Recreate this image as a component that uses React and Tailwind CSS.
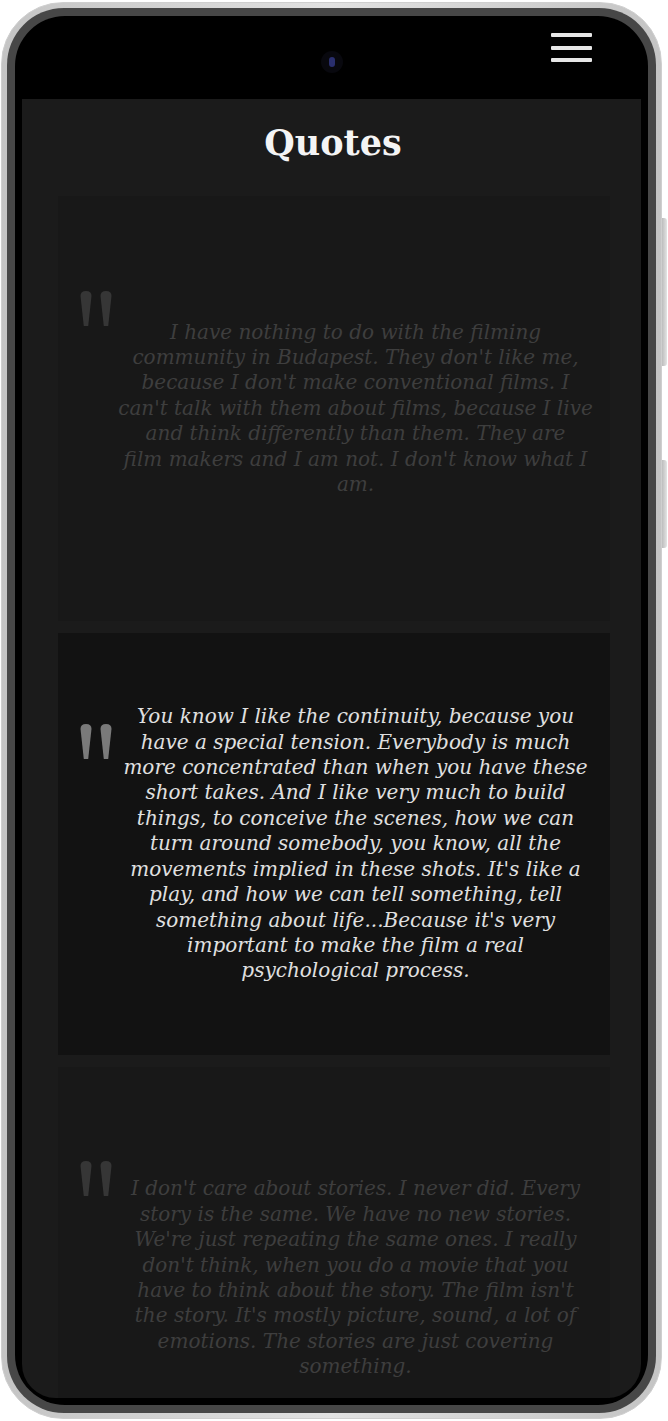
import React from "react";

const quotes = [
  {
    lines: [
      "I have nothing to do with the filming",
      "community in Budapest. They don't like me,",
      "because I don't make conventional films. I",
      "can't talk with them about films, because I live",
      "and think differently than them. They are",
      "film makers and I am not. I don't know what I",
      "am.",
    ],
    active: false,
    height: "h-[425px]",
    markTop: "mt-[95px]",
  },
  {
    lines: [
      "You know I like the continuity, because you",
      "have a special tension. Everybody is much",
      "more concentrated than when you have these",
      "short takes. And I like very much to build",
      "things, to conceive the scenes, how we can",
      "turn around somebody, you know, all the",
      "movements implied in these shots. It's like a",
      "play, and how we can tell something, tell",
      "something about life...Because it's very",
      "important to make the film a real",
      "psychological process.",
    ],
    active: true,
    height: "h-[422px]",
    markTop: "mt-[91px]",
  },
  {
    lines: [
      "I don't care about stories. I never did. Every",
      "story is the same. We have no new stories.",
      "We're just repeating the same ones. I really",
      "don't think, when you do a movie that you",
      "have to think about the story. The film isn't",
      "the story. It's mostly picture, sound, a lot of",
      "emotions. The stories are just covering",
      "something.",
    ],
    active: false,
    height: "h-[422px]",
    markTop: "mt-[94px]",
  },
];

// big straight double quote, two tapered strokes
const QuoteMark = ({ active }) => (
  <svg width="34" height="36" viewBox="0 0 34 36" className={active ? "text-[#7a7a7a]" : "text-[#363636]"}>
    <path d="M0.5 5 Q0.5 0 6 0 Q11.5 0 11.5 5 L8.2 35 L3.8 35 Z" fill="currentColor" />
    <path d="M20.5 5 Q20.5 0 26 0 Q31.5 0 31.5 5 L28.2 35 L23.8 35 Z" fill="currentColor" />
  </svg>
);

const QuoteCard = ({ quote }) => (
  <div
    className={`flex shrink-0 pl-[22px] pr-[13px] ${quote.height} ${
      quote.active ? "bg-[#121212]" : "bg-[#181818]"
    }`}
  >
    <div className={`shrink-0 ${quote.markTop}`}>
      <QuoteMark active={quote.active} />
    </div>
    <p
      className={`flex-1 self-center text-center italic text-[20px] leading-[25.4px] whitespace-nowrap ${
        quote.active ? "text-[#e0e0e0]" : "text-[#3e3e3e]"
      }`}
      style={{ fontFamily: '"DejaVu Serif", "Liberation Serif", serif' }}
    >
      {quote.lines.map((line, i) => (
        <span key={i} className="block">
          {line}
        </span>
      ))}
    </p>
  </div>
);

export default function App() {
  return (
    <div className="min-h-screen bg-white pl-[1px] pt-[2px]">
      <div className="relative w-[661px] h-[1417px]">
        {/* side buttons */}
        <div className="absolute -right-[5px] top-[216px] w-[5px] h-[148px] rounded-r-[3px] bg-gradient-to-r from-[#bdbdbd] to-[#e4e4e4]" />
        <div className="absolute -right-[5px] top-[458px] w-[5px] h-[88px] rounded-r-[3px] bg-gradient-to-r from-[#bdbdbd] to-[#e4e4e4]" />

        <div className="h-full rounded-[62px] p-[5px] bg-gradient-to-r from-[#c4c4c4] via-[#e2e2e2] to-[#c4c4c4] border border-[#cfcfcf]">
          <div className="h-full rounded-[57px] p-[8px] bg-[#474747]">
            <div className="h-full rounded-[50px] bg-black flex flex-col px-[7px] pb-[7px]">
              {/* top bezel */}
              <div className="relative h-[83px] shrink-0 flex justify-end pt-[17px] pr-[49px]">
                <div className="absolute left-[299px] top-[35px] w-[22px] h-[22px] rounded-full bg-[#08080e] flex items-center justify-center">
                  <div className="w-[6px] h-[10px] rounded-full bg-[#2a2f6e]" />
                </div>
                <div className="flex flex-col gap-[8.5px]">
                  <div className="w-[41px] h-[4px] rounded-[1px] bg-[#e6e6e6]" />
                  <div className="w-[41px] h-[4px] rounded-[1px] bg-[#e6e6e6]" />
                  <div className="w-[41px] h-[4px] rounded-[1px] bg-[#e6e6e6]" />
                </div>
              </div>

              {/* screen */}
              <div className="flex-1 bg-[#1b1b1b] rounded-b-[34px] overflow-hidden flex flex-col">
                <h1
                  className="text-center text-[35px] font-bold leading-[46px] text-[#f4f4f4] pt-[21px] mb-[30px] pl-[3px]"
                  style={{ fontFamily: '"DejaVu Serif", "Liberation Serif", serif' }}
                >
                  Quotes
                </h1>
                <div className="flex flex-col gap-[12px] ml-[36px] w-[552px]">
                  {quotes.map((q, i) => (
                    <QuoteCard key={i} quote={q} />
                  ))}
                </div>
              </div>
            </div>
          </div>
        </div>
      </div>
    </div>
  );
}
